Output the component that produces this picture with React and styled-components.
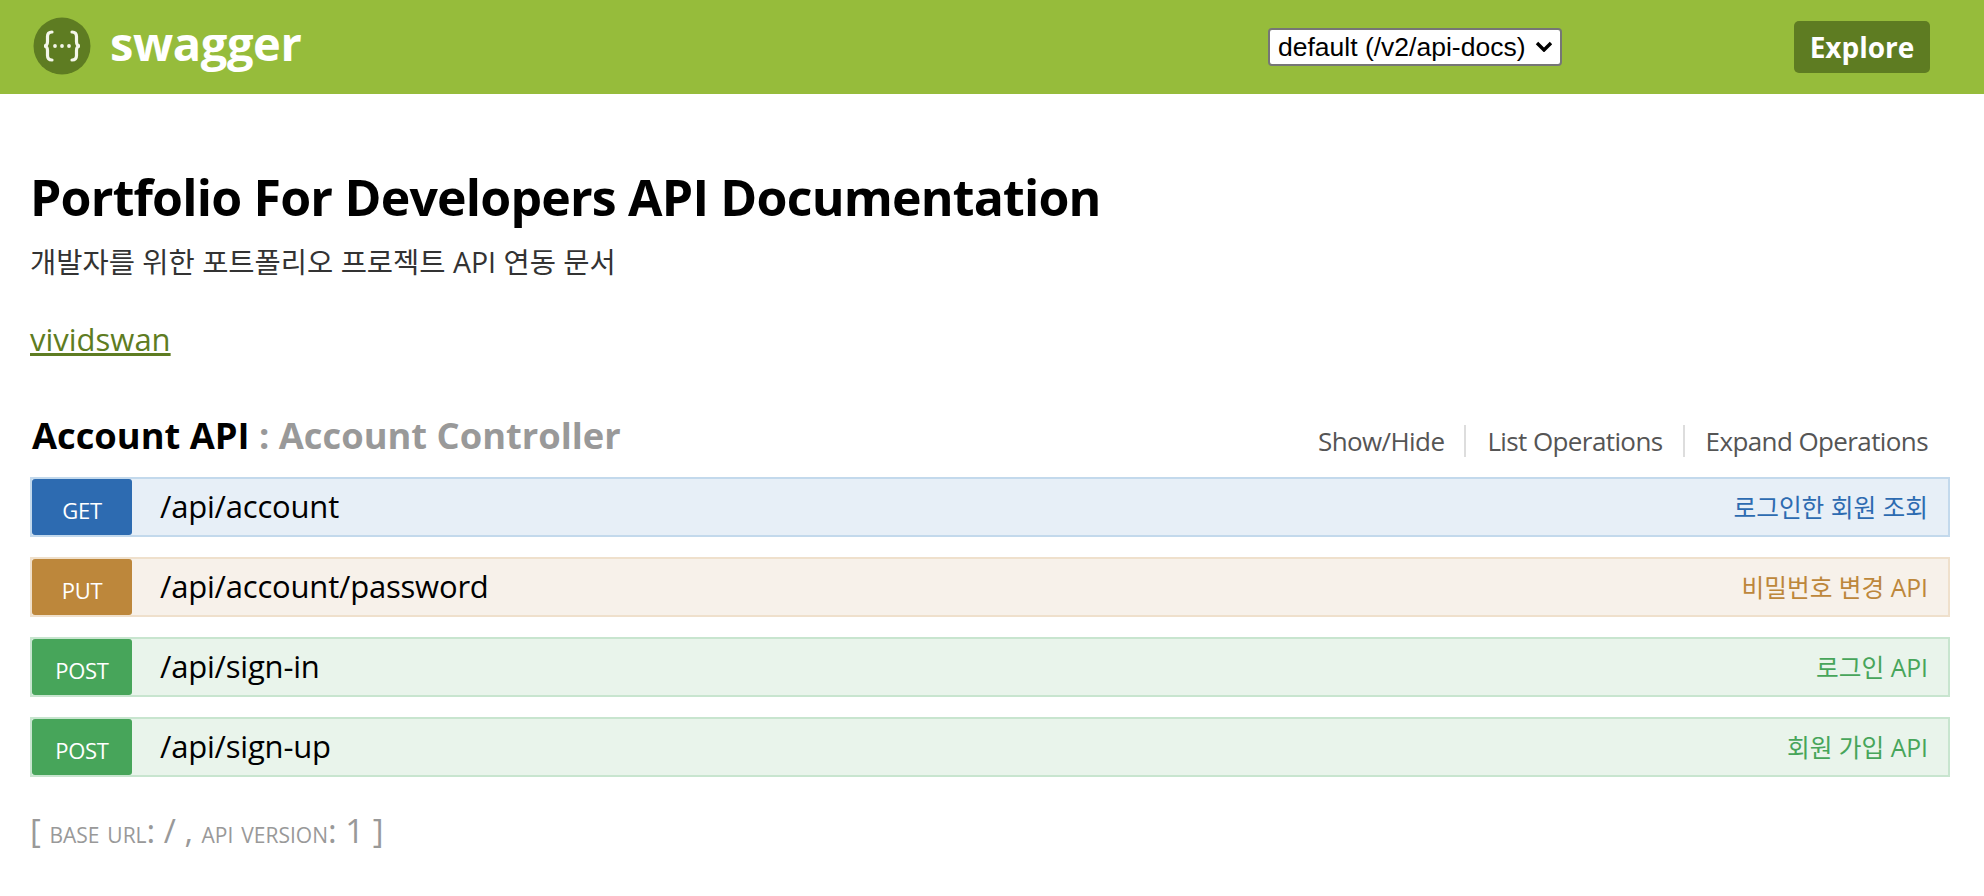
import React from "react";
import styled, { createGlobalStyle } from "styled-components";

const GlobalStyle = createGlobalStyle`
  html, body {
    margin: 0;
    padding: 0;
    background: #fff;
    font-family: "Open Sans", "Noto Sans CJK KR", sans-serif;
  }
`;

const Header = styled.header`
  height: 94px;
  background: #96bc3b;
  display: flex;
  align-items: center;
  padding: 0 54px 0 33px;
`;

const Brand = styled.div`
  display: flex;
  align-items: center;
  gap: 19px;
  flex: 1;
`;

const LogoMark = styled.svg`
  width: 58px;
  height: 58px;
  margin-top: -2px;
`;

const LogoText = styled.span`
  color: #fff;
  font-size: 47px;
  font-weight: 700;
  line-height: 1;
  letter-spacing: -0.4px;
  margin-top: -7px;
`;

const SpecSelect = styled.select`
  appearance: none;
  width: 294px;
  height: 38px;
  margin-right: 232px;
  margin-top: -1px;
  font-family: "Liberation Sans", sans-serif;
  font-size: 26.5px;
  color: #000;
  border: 2px solid #767676;
  border-radius: 4px;
  padding: 0 2px 0 8px;
  background: #fff url("data:image/svg+xml,%3Csvg xmlns='http://www.w3.org/2000/svg' width='18' height='11' viewBox='0 0 18 11'%3E%3Cpath d='M2 2l7 7 7-7' fill='none' stroke='%23000' stroke-width='3.4'/%3E%3C/svg%3E") no-repeat right 7px center;
`;

const ExploreButton = styled.button`
  width: 136px;
  height: 52px;
  margin-top: -1px;
  border: none;
  border-radius: 5px;
  background: #5e7c22;
  color: #fff;
  font-family: inherit;
  font-size: 28px;
  font-weight: 700;
  padding: 0;
`;

const Main = styled.main`
  padding: 68px 34px 0 30px;
`;

const Title = styled.h1`
  margin: 0;
  font-size: 50px;
  line-height: 70px;
  font-weight: 700;
  letter-spacing: -0.8px;
  color: #000;
`;

const Description = styled.p`
  margin: 12px 0 0;
  font-size: 28.5px;
  line-height: 36px;
  color: #333;
`;

const ContactLink = styled.a`
  display: inline-block;
  margin-top: 38px;
  font-size: 31px;
  line-height: 42px;
  color: #5e7c22;
  text-decoration: underline;
`;

const SectionHead = styled.div`
  display: flex;
  align-items: center;
  justify-content: space-between;
  margin-top: 50px;
  height: 50px;
  padding: 0 22px 0 2px;
`;

const SectionTitle = styled.h2`
  margin: 0;
  font-size: 36.3px;
  line-height: 50px;
  font-weight: 700;
  color: #000;
`;

const Muted = styled.span`
  color: #999;
`;

const Actions = styled.ul`
  display: flex;
  list-style: none;
  margin: 12px 0 0;
  padding: 0;
`;

const Action = styled.li`
  font-size: 26px;
  line-height: 32px;
  letter-spacing: -0.6px;
  color: #555;
  padding: 0 20px 0 21px;
  border-left: 2px solid #ddd;

  &:first-child {
    border-left: none;
  }

  &:last-child {
    padding-right: 0;
  }
`;

const Operations = styled.div`
  display: flex;
  flex-direction: column;
  gap: 20px;
  margin-top: 17px;
`;

const methodColors = {
  GET: { main: "#2d6bb1", bg: "#e7eff7", line: "#c3d9ec" },
  PUT: { main: "#bd873b", bg: "#f7f1ea", line: "#efe0cc" },
  POST: { main: "#47a55a", bg: "#e9f4eb", line: "#c8e5cf" },
};

const Operation = styled.div`
  height: 60px;
  box-sizing: border-box;
  display: flex;
  align-items: center;
  padding: 0 20px 0 0;
  background: ${(p) => methodColors[p.$method].bg};
  border: 2px solid ${(p) => methodColors[p.$method].line};
`;

const Method = styled.span`
  width: 100px;
  height: 56px;
  display: flex;
  align-items: center;
  justify-content: center;
  padding-top: 5px;
  box-sizing: border-box;
  border-radius: 3px;
  background: ${(p) => methodColors[p.$method].main};
  color: #fff;
  font-size: 22px;
  font-weight: 500;
  letter-spacing: -0.3px;
`;

const Path = styled.span`
  flex: 1;
  margin: 0 0 2px 28px;
  font-size: 31px;
  letter-spacing: -0.2px;
  color: #000;
`;

const Summary = styled.span`
  margin-bottom: 3px;
  font-size: 24.7px;
  color: ${(p) => methodColors[p.$method].main};
`;

const Footer = styled.div`
  margin-top: 32px;
  font-size: 33px;
  line-height: 44px;
  color: #999;
`;

const Small = styled.small`
  font-size: 30.5px;
  font-variant: small-caps;
`;

const rows = [
  { method: "GET", path: "/api/account", summary: "로그인한 회원 조회" },
  { method: "PUT", path: "/api/account/password", summary: "비밀번호 변경 API" },
  { method: "POST", path: "/api/sign-in", summary: "로그인 API" },
  { method: "POST", path: "/api/sign-up", summary: "회원 가입 API" },
];

const SwaggerLogo = () => (
  <LogoMark viewBox="0 0 58 58">
    <circle cx="29" cy="29" r="28.5" fill="#5e7c22" />
    <g fill="none" stroke="#f4f6ea" strokeWidth="3.2" strokeLinecap="round">
      <path d="M19 15c-3.500 0-4.500 2-4.500 4.500v5c0 2-.8 4.500-3.500 4.500 2.700 0 3.500 2.500 3.500 4.500v5c0 2.500 1 4.500 4.500 4.500" />
      <path d="M39 15c3.500 0 4.500 2 4.500 4.500v5c0 2 .8 4.500 3.500 4.500-2.700 0-3.500 2.500-3.500 4.500v5c0 2.500-1 4.500-4.500 4.500" />
    </g>
    <g fill="#f4f6ea">
      <circle cx="22" cy="29" r="1.900" />
      <circle cx="29" cy="29" r="1.900" />
      <circle cx="36" cy="29" r="1.900" />
    </g>
  </LogoMark>
);

const App = () => {
  return (
    <>
      <GlobalStyle />
      <Header>
        <Brand>
          <SwaggerLogo />
          <LogoText>swagger</LogoText>
        </Brand>
        <SpecSelect defaultValue="default">
          <option value="default">default (/v2/api-docs)</option>
        </SpecSelect>
        <ExploreButton>Explore</ExploreButton>
      </Header>
      <Main>
        <Title>Portfolio For Developers API Documentation</Title>
        <Description>개발자를 위한 포트폴리오 프로젝트 API 연동 문서</Description>
        <ContactLink href="#">vividswan</ContactLink>
        <SectionHead>
          <SectionTitle>
            Account API <Muted>: Account Controller</Muted>
          </SectionTitle>
          <Actions>
            <Action>Show/Hide</Action>
            <Action>List Operations</Action>
            <Action>Expand Operations</Action>
          </Actions>
        </SectionHead>
        <Operations>
          {rows.map((row) => (
            <Operation key={row.path} $method={row.method}>
              <Method $method={row.method}>{row.method}</Method>
              <Path>{row.path}</Path>
              <Summary $method={row.method}>{row.summary}</Summary>
            </Operation>
          ))}
        </Operations>
        <Footer>
          [ <Small>base url</Small>: / , <Small>api version</Small>: 1 ]
        </Footer>
      </Main>
    </>
  );
};

export default App;
